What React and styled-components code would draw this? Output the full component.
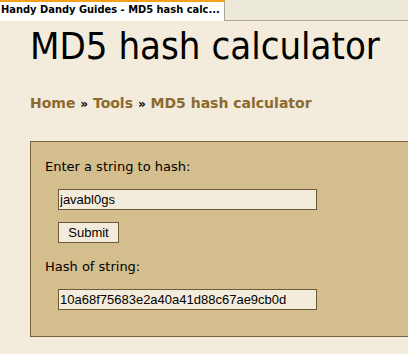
import styled, { createGlobalStyle } from "styled-components";

const Global = createGlobalStyle`
  html, body {
    margin: 0;
    padding: 0;
    background: #f3ebdb;
  }
`;

const TabBar = styled.div`
  display: flex;
  height: 20px;
  background: #ece9d8;
  border-bottom: 1px solid #aca899;
`;

const Tab = styled.div`
  width: 225px;
  height: 21px;
  box-sizing: border-box;
  background: #ffffff;
  border-top: 2px solid #f7a11a;
  border-right: 1px solid #aca899;
  padding: 1px 0 0 1px;
  font: bold 11px "DejaVu Sans", sans-serif;
  font-stretch: condensed;
  color: #000;
  white-space: nowrap;
`;

const Page = styled.div`
  padding: 0 0 0 30px;
`;

const Title = styled.h1`
  margin: 3px 0 0;
  font: normal 38px "DejaVu Sans", sans-serif;
  font-stretch: condensed;
  color: #000;
  line-height: 44px;
`;

const Crumbs = styled.div`
  margin-top: 27px;
  font: bold 14px "DejaVu Sans", sans-serif;
  color: #8c6a2e;
  line-height: 17px;
`;

const Sep = styled.span`
  color: #000;
  font-size: 12px;
`;

const Panel = styled.div`
  margin-top: 28px;
  height: 196px;
  box-sizing: border-box;
  background: #d5be8d;
  border: 1px solid #7a6440;
  border-right: none;
  padding: 17px 0 0 14px;
`;

const Label = styled.div`
  font: normal 13px "DejaVu Sans", sans-serif;
  color: #000;
  height: 16px;
  line-height: 16px;
`;

const Field = styled.input`
  display: block;
  margin: 14px 0 0 13px;
  width: 259px;
  height: 21px;
  box-sizing: border-box;
  background: #f3ebdb;
  border: 1px solid #6e5a3a;
  padding: 0 1px;
  font: 13px "Liberation Sans", Arial, sans-serif;
  color: #000;
  outline: none;
`;

const Button = styled.button`
  display: block;
  margin: 12px 0 16px 13px;
  width: 61px;
  height: 21px;
  box-sizing: border-box;
  background: #f3ebdb;
  border: 1px solid #6e5a3a;
  font: 13px "Liberation Sans", Arial, sans-serif;
  color: #000;
  padding: 0;
`;

export default function App() {
  return (
    <>
      <Global />
      <TabBar>
        <Tab>Handy Dandy Guides - MD5 hash calc...</Tab>
      </TabBar>
      <Page>
        <Title>MD5 hash calculator</Title>
        <Crumbs>
          Home <Sep>»</Sep> Tools <Sep>»</Sep> MD5 hash calculator
        </Crumbs>
        <Panel>
          <Label>Enter a string to hash:</Label>
          <Field type="text" defaultValue="javabl0gs" />
          <Button>Submit</Button>
          <Label>Hash of string:</Label>
          <Field type="text" defaultValue="10a68f75683e2a40a41d88c67ae9cb0d" />
        </Panel>
      </Page>
    </>
  );
}
